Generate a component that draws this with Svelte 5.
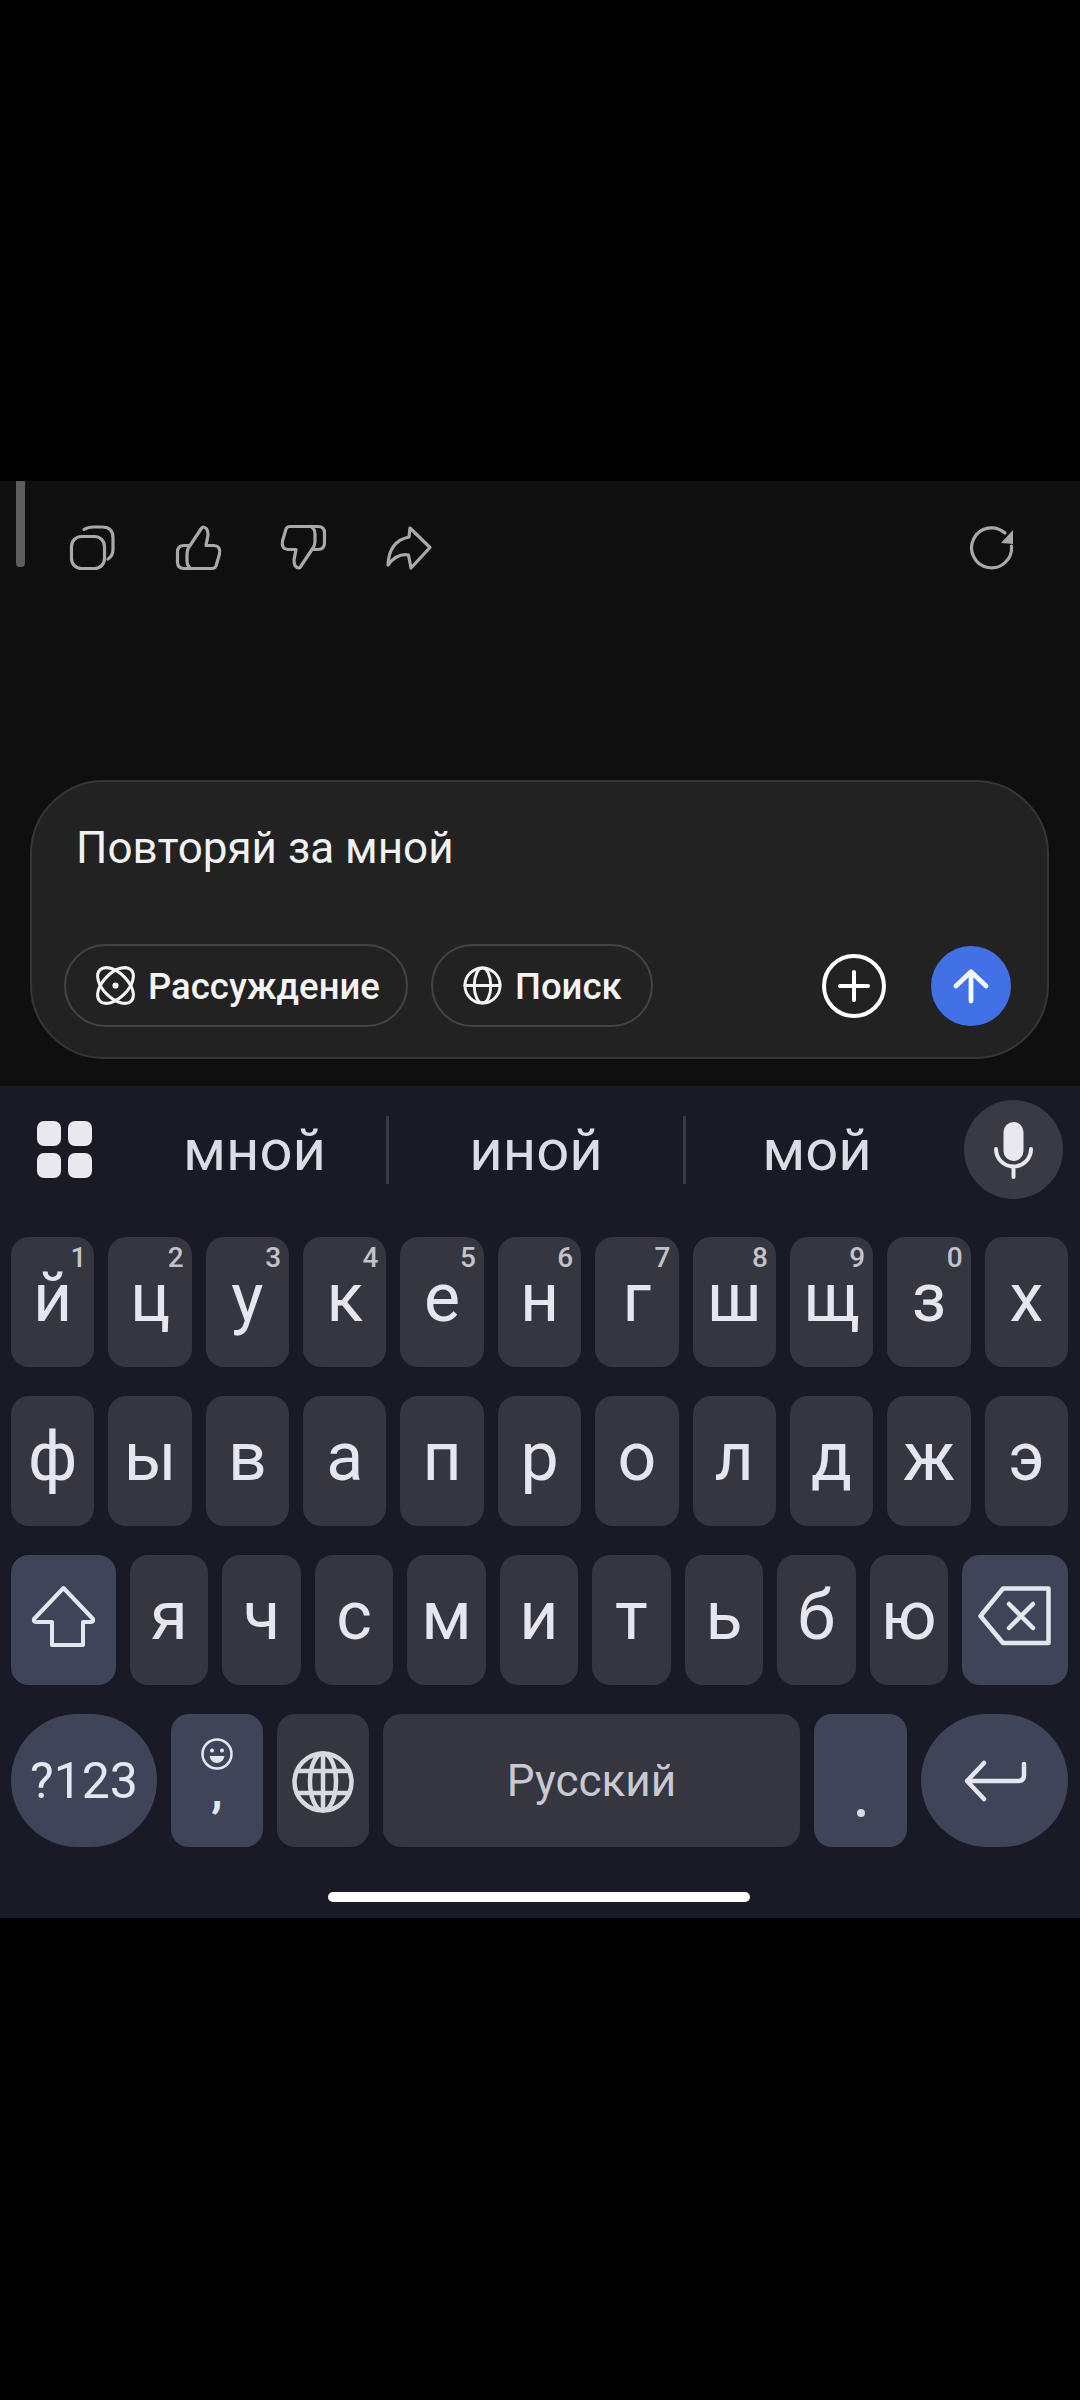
<script>
	const row1 = [
		['й', '1'], ['ц', '2'], ['у', '3'], ['к', '4'], ['е', '5'], ['н', '6'],
		['г', '7'], ['ш', '8'], ['щ', '9'], ['з', '0'], ['х', '']
	];
	const row2 = ['ф', 'ы', 'в', 'а', 'п', 'р', 'о', 'л', 'д', 'ж', 'э'];
	const row3 = ['я', 'ч', 'с', 'м', 'и', 'т', 'ь', 'б', 'ю'];
</script>

<div class="screen">
	<div class="top"></div>

	<section class="chat">
		<div class="scrollbar"></div>
		<div class="actions">
			<div class="action-group">
				<svg class="action" viewBox="0 0 45 45">
					<rect x="1.5" y="11.5" width="33" height="32" rx="10" />
					<path d="M14 4.5Q18 2 24 2H32Q43 2 43 13V24Q43 31 38 34" />
				</svg>
				<svg class="action" viewBox="0 0 45 45">
					<path d="M13 43.5H36Q39 43.5 40 41L43.5 29Q45 21 38 20.5H30L32 10Q32 2 27 2Q26 2 25 4L14 20.5H8Q1.5 20.5 1.5 27V37Q1.5 43.5 8 43.5H13" />
					<path d="M14 20.5Q11 24 11 30V36Q11 41 15 43.5" />
				</svg>
				<svg class="action" viewBox="0 0 45 45">
					<g transform="rotate(180 22.5 22.5)">
						<path d="M13 43.5H36Q39 43.5 40 41L43.5 29Q45 21 38 20.5H30L32 10Q32 2 27 2Q26 2 25 4L14 20.5H8Q1.5 20.5 1.5 27V37Q1.5 43.5 8 43.5H13" />
						<path d="M14 20.5Q11 24 11 30V36Q11 41 15 43.5" />
					</g>
				</svg>
				<svg class="action" viewBox="0 0 45 45">
					<path d="M23 3L43 22.5L24 43L21.5 30Q10 28 1 40Q2 16 22 12Z" />
				</svg>
			</div>
			<svg class="action" viewBox="0 0 45 45">
				<path d="M35 8A20 20 0 1 0 41.5 21" />
				<path class="solid" d="M43 5V19L31 18Z" />
			</svg>
		</div>

		<div class="card">
			<div class="prompt">Повторяй за мной</div>
			<div class="tools">
				<div class="chip chip-wide">
					<svg class="chip-icon" viewBox="0 0 38 38">
						<ellipse cx="19" cy="19" rx="21.5" ry="12" transform="rotate(45 19 19)" />
						<ellipse cx="19" cy="19" rx="21.5" ry="12" transform="rotate(-45 19 19)" />
						<circle class="solid" cx="19" cy="19" r="3" />
					</svg>
					<span>Рассуждение</span>
				</div>
				<div class="chip">
					<svg class="chip-icon" viewBox="0 0 40 40">
						<circle cx="20" cy="20" r="18" />
						<ellipse cx="20" cy="20" rx="8.5" ry="18" />
						<path d="M2 20H38" />
					</svg>
					<span>Поиск</span>
				</div>
				<svg class="plus" viewBox="0 0 64 64">
					<circle cx="32" cy="32" r="30" />
					<path d="M18 32H46M32 18V46" />
				</svg>
				<div class="send">
					<svg viewBox="0 0 36 36">
						<path d="M18 34V3M2 18L18 3L34 18" />
					</svg>
				</div>
			</div>
		</div>
	</section>

	<section class="keyboard">
		<div class="suggest">
			<div class="apps">
				<span></span><span></span><span></span><span></span>
			</div>
			<div class="word word-split">мной</div>
			<div class="word word-split">иной</div>
			<div class="word">мой</div>
			<div></div>
			<div class="mic">
				<svg viewBox="0 0 41 55">
					<rect class="solid" x="10.5" y="0" width="20" height="39" rx="10" />
					<path d="M3 27A17.5 17.5 0 0 0 38 27M20.5 45V55" />
				</svg>
			</div>
		</div>

		<div class="rows">
			<div class="row row-full">
				{#each row1 as [letter, hint]}
					<div class="key">
						{letter}
						{#if hint}<span class="hint">{hint}</span>{/if}
					</div>
				{/each}
			</div>
			<div class="row row-full">
				{#each row2 as letter}
					<div class="key">{letter}</div>
				{/each}
			</div>
			<div class="row row-shift">
				<div class="key key-fn">
					<svg class="shift" viewBox="0 0 65 62">
						<path d="M32.5 3L62 34Q63 37 60 37H52V60H21V37H5Q2 37 3 34Z" />
					</svg>
				</div>
				{#each row3 as letter}
					<div class="key">{letter}</div>
				{/each}
				<div class="key key-fn">
					<svg class="backspace" viewBox="0 0 73 60">
						<path d="M2.5 30L25 2.5H70.5V57H25Z" />
						<path d="M31 18L55 42M55 18L31 42" />
					</svg>
				</div>
			</div>
			<div class="row row-bottom">
				<div class="key key-fn key-round key-num">?123</div>
				<div class="key key-fn key-comma">
					<svg class="emoji" viewBox="0 0 32 32">
						<circle cx="16" cy="16" r="14.5" />
						<circle class="solid" cx="11" cy="12.5" r="2" />
						<circle class="solid" cx="21" cy="12.5" r="2" />
						<path class="solid" d="M8.5 18H23.5Q22 25 16 25Q10 25 8.5 18Z" />
					</svg>
					<span class="comma">,</span>
				</div>
				<div class="key key-lang">
					<svg class="lang" viewBox="0 0 62 62">
						<circle cx="31" cy="31" r="28.5" />
						<ellipse cx="31" cy="31" rx="13" ry="28.5" />
						<path d="M5 20H57M5 42H57M31 3V59" />
					</svg>
				</div>
				<div class="key key-space">Русский</div>
				<div class="key key-fn key-period"><span class="dot"></span></div>
				<div class="key key-fn key-round">
					<svg class="enter" viewBox="0 0 62 40">
						<path d="M60 3V14Q60 20 54 20H3M20 2L3 20L20 38" />
					</svg>
				</div>
			</div>
		</div>

		<div class="home-bar"></div>
	</section>
</div>

<style>
	:global(body) {
		background: #000;
	}

	.screen {
		width: 1080px;
		height: 2400px;
		background: #000;
		font-family: Roboto, 'Noto Sans', sans-serif;
		overflow: hidden;
	}

	svg {
		display: block;
		fill: none;
		stroke: currentColor;
		stroke-linecap: round;
		stroke-linejoin: round;
		overflow: visible;
	}

	svg .solid {
		fill: currentColor;
		stroke: none;
	}

	.top {
		height: 481px;
	}

	/* chat */
	.chat {
		position: relative;
		height: 605px;
		background: #0f0f0f;
		overflow: hidden;
	}

	.scrollbar {
		position: absolute;
		left: 16px;
		top: 0;
		width: 9px;
		height: 86px;
		background: #5e5e5e;
		border-radius: 0 0 4px 4px;
	}

	.actions {
		display: flex;
		justify-content: space-between;
		padding: 44px 65px 0 70px;
	}

	.action-group {
		display: flex;
		gap: 60.5px;
	}

	.action {
		width: 45px;
		height: 45px;
		color: #a9a9a9;
		stroke-width: 3.2;
	}

	.card {
		box-sizing: border-box;
		width: 1019px;
		height: 279px;
		margin: 210px 0 0 30px;
		background: #222;
		border: 2px solid #363636;
		border-radius: 74px;
		display: flex;
		flex-direction: column;
		justify-content: space-between;
		padding: 41px 0 30px 32px;
	}

	.prompt {
		margin-left: 12px;
		font-size: 44px;
		line-height: 50px;
		color: #f1f1f1;
	}

	.tools {
		display: flex;
		align-items: center;
		height: 83px;
	}

	.chip {
		box-sizing: border-box;
		height: 83px;
		width: 222px;
		margin-right: 23px;
		display: flex;
		align-items: center;
		gap: 13px;
		padding: 2px 0 0 30px;
		border: 2px solid #444;
		border-radius: 42px;
		font-size: 36.5px;
		font-weight: 500;
		color: #f4f4f4;
	}

	.chip-wide {
		width: 344px;
		gap: 13px;
	}

	.chip-icon {
		width: 39px;
		height: 39px;
		margin-top: -2px;
		stroke-width: 3;
	}

	.plus {
		width: 64px;
		height: 64px;
		margin-left: 146px;
		color: #fff;
		stroke-width: 4;
	}

	.send {
		width: 80px;
		height: 80px;
		margin-left: 45px;
		border-radius: 50%;
		background: #4271e6;
		color: #f6f8ff;
		display: flex;
		align-items: center;
		justify-content: center;
	}

	.send svg {
		width: 34px;
		height: 34px;
		stroke-width: 5;
	}

	/* keyboard */
	.keyboard {
		height: 832px;
		background: #191a25;
		padding-top: 14px;
		box-sizing: border-box;
		color: #e6e6ee;
	}

	.suggest {
		display: grid;
		grid-template-columns: 123px 266px 297px 262px 16px 99px;
		align-items: center;
		height: 99px;
	}

	.apps {
		display: grid;
		grid-template-columns: 24px 24px;
		gap: 7px;
		margin-left: 37px;
	}

	.apps span {
		height: 25px;
		border-radius: 7px;
		background: #e8e8ee;
	}

	.word {
		height: 68px;
		display: flex;
		align-items: center;
		justify-content: center;
		font-size: 58px;
		line-height: 68px;
		color: #dcdce4;
	}

	.word-split {
		border-right: 3px solid #3a3b45;
	}

	.mic {
		width: 99px;
		height: 99px;
		border-radius: 50%;
		background: #3a3a45;
		display: flex;
		align-items: center;
		justify-content: center;
	}

	.mic svg {
		width: 41px;
		height: 55px;
		color: #e8e8ee;
		stroke-width: 4;
	}

	.rows {
		display: flex;
		flex-direction: column;
		gap: 29px;
		margin-top: 38px;
		padding: 0 12px 0 11px;
	}

	.row {
		display: grid;
		gap: 14px;
		height: 130px;
	}

	.row-full {
		grid-template-columns: repeat(11, 1fr);
	}

	.row-shift {
		grid-template-columns: 105px repeat(9, 1fr) 106px;
	}

	.row-bottom {
		grid-template-columns: 146px 92px 92px 1fr 93px 147px;
		height: 133px;
	}

	.key {
		position: relative;
		box-sizing: border-box;
		display: flex;
		align-items: center;
		justify-content: center;
		padding-bottom: 8px;
		background: #363640;
		border-radius: 18px;
		font-size: 68px;
		line-height: 1;
		color: #e6e6ee;
	}

	.key-fn {
		background: #3f4559;
	}

	.key-round {
		border-radius: 67px;
		padding-bottom: 0;
	}

	.key-lang {
		padding-bottom: 0;
		padding-top: 2px;
	}

	.key-num {
		font-size: 50px;
		padding-top: 1px;
	}

	.key-space {
		font-size: 44px;
		padding-bottom: 0;
		padding-top: 1px;
		color: #c9c9d2;
	}

	.key-comma {
		flex-direction: column;
		justify-content: flex-start;
		padding: 24px 0 0;
	}

	.key-period {
		align-items: flex-end;
		padding: 0 0 30px;
	}

	.hint {
		position: absolute;
		top: 7px;
		right: 8px;
		font-size: 28px;
		line-height: 1;
		font-weight: 500;
		color: #c3c3cb;
	}

	.shift {
		width: 65px;
		height: 62px;
		stroke-width: 4;
	}

	.backspace {
		width: 73px;
		height: 60px;
		stroke-width: 4.5;
	}

	.emoji {
		width: 32px;
		height: 32px;
		stroke-width: 2.5;
	}

	.comma {
		font-size: 46px;
		line-height: 46px;
		font-weight: 700;
		margin-top: -2px;
	}

	.lang {
		width: 62px;
		height: 62px;
		color: #d9d9e0;
		stroke-width: 4.5;
	}

	.dot {
		width: 8px;
		height: 8px;
		border-radius: 50%;
		background: #d8d8e0;
	}

	.enter {
		width: 62px;
		height: 40px;
		stroke-width: 4.5;
	}

	.home-bar {
		width: 422px;
		height: 10px;
		margin: 45px 0 0 328px;
		border-radius: 5px;
		background: #fff;
	}
</style>
